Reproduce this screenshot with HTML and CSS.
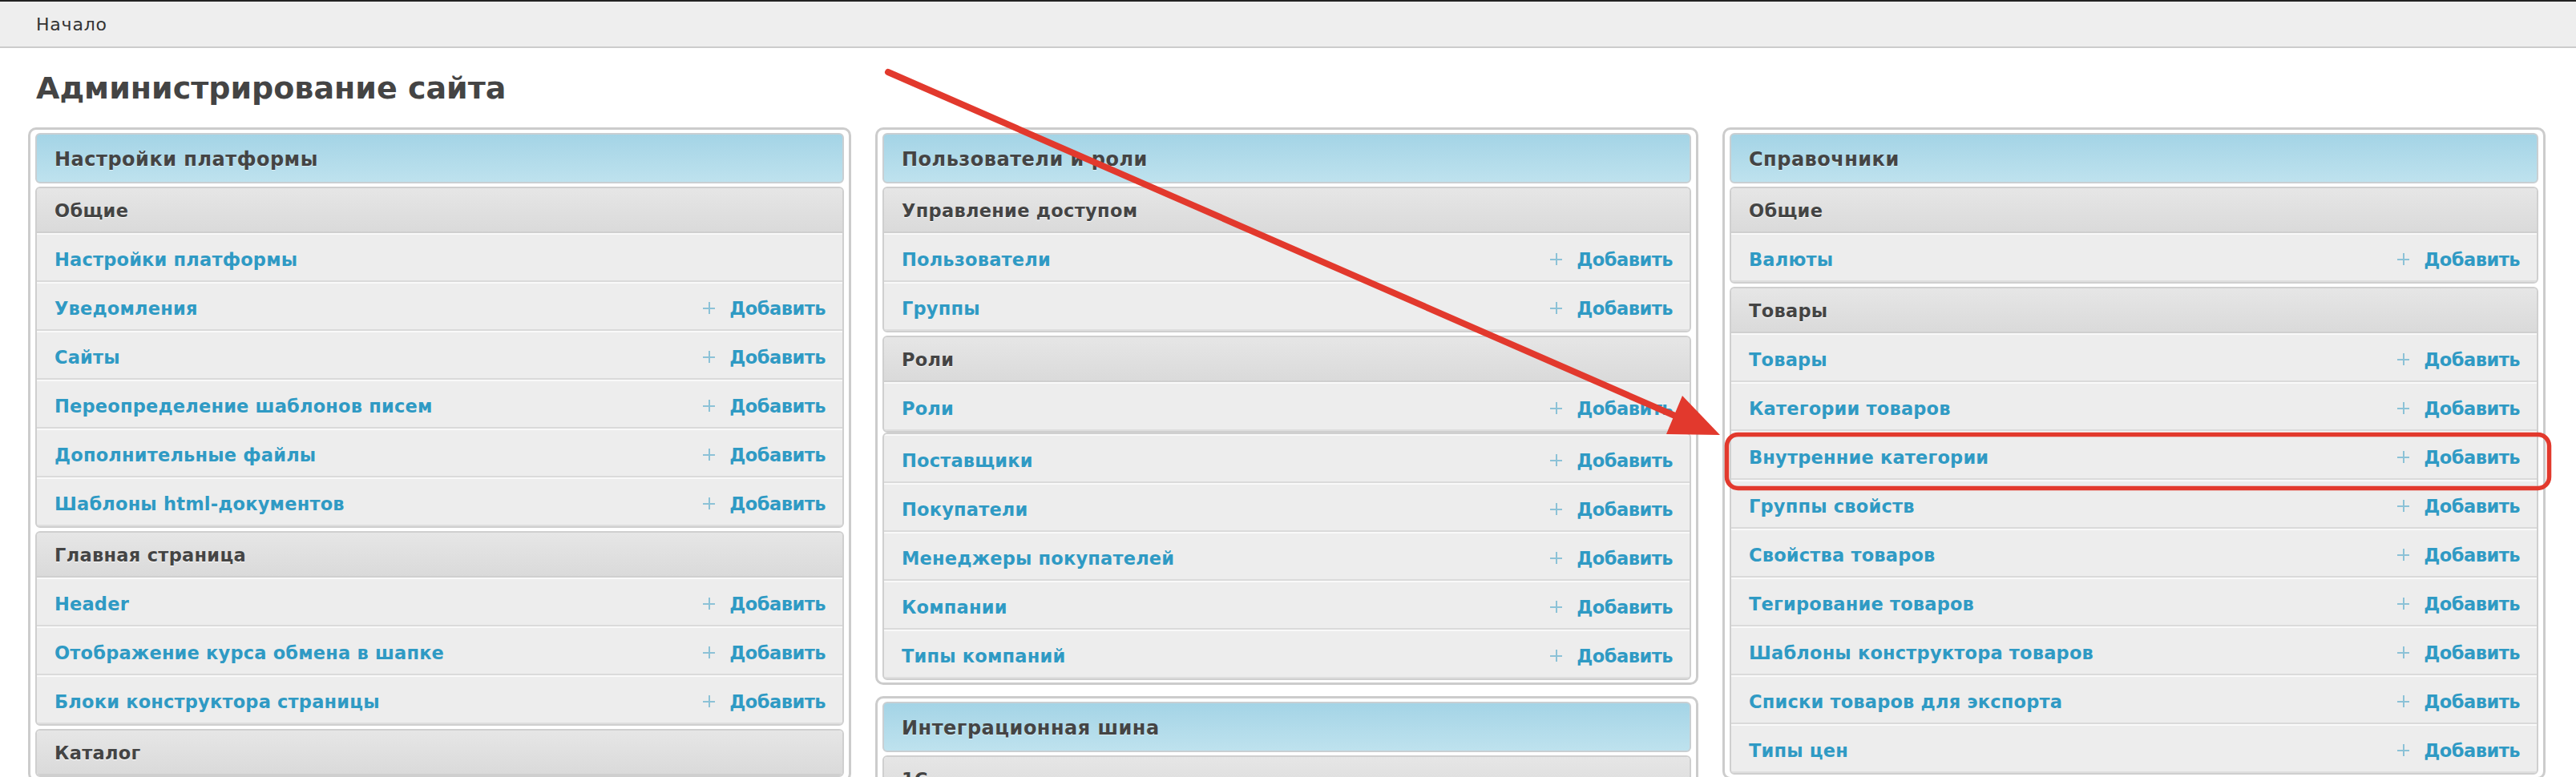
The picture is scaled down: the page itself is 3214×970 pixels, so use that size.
FILE: index.html
```html
<!DOCTYPE html>
<html lang="ru">
<head>
  <meta charset="UTF-8">
  <title>Администрирование сайта</title>
  <link rel="stylesheet" href="styles.css">
</head>
<body>
  <div class="topbar"><a class="crumb">Начало</a></div>

  <div class="content">
    <h1>Администрирование сайта</h1>

    <div class="dashboard">
      <!-- left column -->
      <div class="column">
        <div class="panel">
          <div class="panel-title">Настройки платформы</div>
          <div class="group">
            <div class="group-title">Общие</div>
            <div class="row"><a class="model">Настройки платформы</a></div>
            <div class="row"><a class="model">Уведомления</a><a class="add">Добавить</a></div>
            <div class="row"><a class="model">Сайты</a><a class="add">Добавить</a></div>
            <div class="row"><a class="model">Переопределение шаблонов писем</a><a class="add">Добавить</a></div>
            <div class="row"><a class="model">Дополнительные файлы</a><a class="add">Добавить</a></div>
            <div class="row"><a class="model">Шаблоны html-документов</a><a class="add">Добавить</a></div>
          </div>
          <div class="group">
            <div class="group-title">Главная страница</div>
            <div class="row"><a class="model">Header</a><a class="add">Добавить</a></div>
            <div class="row"><a class="model">Отображение курса обмена в шапке</a><a class="add">Добавить</a></div>
            <div class="row"><a class="model">Блоки конструктора страницы</a><a class="add">Добавить</a></div>
          </div>
          <div class="group">
            <div class="group-title">Каталог</div>
          </div>
        </div>
      </div>

      <!-- middle column -->
      <div class="column">
        <div class="panel">
          <div class="panel-title">Пользователи и роли</div>
          <div class="group">
            <div class="group-title">Управление доступом</div>
            <div class="row"><a class="model">Пользователи</a><a class="add">Добавить</a></div>
            <div class="row"><a class="model">Группы</a><a class="add">Добавить</a></div>
          </div>
          <div class="group">
            <div class="group-title">Роли</div>
            <div class="row"><a class="model">Роли</a><a class="add">Добавить</a></div>
          </div>
          <div class="group plain">
            <div class="row"><a class="model">Поставщики</a><a class="add">Добавить</a></div>
            <div class="row"><a class="model">Покупатели</a><a class="add">Добавить</a></div>
            <div class="row"><a class="model">Менеджеры покупателей</a><a class="add">Добавить</a></div>
            <div class="row"><a class="model">Компании</a><a class="add">Добавить</a></div>
            <div class="row"><a class="model">Типы компаний</a><a class="add">Добавить</a></div>
          </div>
        </div>
        <div class="panel">
          <div class="panel-title">Интеграционная шина</div>
          <div class="group">
            <div class="group-title">1С</div>
          </div>
        </div>
      </div>

      <!-- right column -->
      <div class="column">
        <div class="panel">
          <div class="panel-title">Справочники</div>
          <div class="group">
            <div class="group-title">Общие</div>
            <div class="row"><a class="model">Валюты</a><a class="add">Добавить</a></div>
          </div>
          <div class="group">
            <div class="group-title">Товары</div>
            <div class="row"><a class="model">Товары</a><a class="add">Добавить</a></div>
            <div class="row"><a class="model">Категории товаров</a><a class="add">Добавить</a></div>
            <div class="row"><a class="model">Внутренние категории</a><a class="add">Добавить</a></div>
            <div class="row"><a class="model">Группы свойств</a><a class="add">Добавить</a></div>
            <div class="row"><a class="model">Свойства товаров</a><a class="add">Добавить</a></div>
            <div class="row"><a class="model">Тегирование товаров</a><a class="add">Добавить</a></div>
            <div class="row"><a class="model">Шаблоны конструктора товаров</a><a class="add">Добавить</a></div>
            <div class="row"><a class="model">Списки товаров для экспорта</a><a class="add">Добавить</a></div>
            <div class="row"><a class="model">Типы цен</a><a class="add">Добавить</a></div>
          </div>
        </div>
      </div>
    </div>
  </div>

  <!-- red annotation drawn over the page -->
  <svg class="annotation" width="3214" height="970" viewBox="0 0 3214 970">
    <rect x="2154.5" y="542.5" width="1026" height="67" rx="14" fill="none" stroke="#e2392d" stroke-width="5.5"/>
    <line x1="1108" y1="90" x2="2092" y2="520" stroke="#e2392d" stroke-width="8" stroke-linecap="round"/>
    <polygon points="2146,543 2079,542 2099,494" fill="#e2392d"/>
  </svg>
</body>
</html>
```

FILE: styles.css
```css
body {
  margin: 0;
  position: relative;
  font-family: "DejaVu Sans", Verdana, sans-serif;
  color: #333;
  background-color: #fff;
  overflow: hidden;
}
a {
  text-decoration: none;
  cursor: pointer;
}

/* breadcrumbs bar */
.topbar {
  height: 56px;
  display: flex;
  align-items: center;
  padding-left: 45px;
  background-color: #eeeeee;
  border-top: 2px solid #222;
  border-bottom: 2px solid #cccccc;
}
.crumb {
  font-size: 22px;
  letter-spacing: 0.8px;
  color: #333;
}

.content {
  padding: 0 38px 0 35px;
}
h1 {
  margin: 27px 0 26px 10px;
  font-size: 38px;
  line-height: 46px;
  font-weight: bold;
  color: #444;
}

.dashboard {
  display: grid;
  grid-template-columns: repeat(3, 1fr);
  gap: 30px;
  align-items: start;
}
.column {
  display: flex;
  flex-direction: column;
  gap: 14px;
}

/* module box */
.panel {
  border: 3px solid #cccccc;
  border-radius: 10px;
  padding: 4px 6px 3px;
  background-color: #fff;
}
.panel-title {
  height: 57px;
  display: flex;
  align-items: center;
  padding: 2px 0 0 22px;
  margin-bottom: 4px;
  border: 2px solid #c9cfd2;
  border-radius: 6px;
  background: linear-gradient(#a4d4e6, #bee2ee);
  font-size: 24px;
  letter-spacing: 0.5px;
  font-weight: bold;
  color: #444;
  text-shadow: 0 1px 0 rgba(255, 255, 255, 0.5);
}

.group {
  border: 2px solid #cfcfcf;
  border-radius: 6px;
  margin-bottom: 4px;
  overflow: hidden;
  background-color: #ededed;
}
.group:last-child {
  margin-bottom: 0;
}
.group.plain {
  margin-top: -4px;
}
.group-title {
  height: 52px;
  display: flex;
  align-items: center;
  padding: 2px 0 0 22px;
  border-bottom: 2px solid #cfcfcf;
  background: linear-gradient(#e6e6e6, #dadada);
  font-size: 22.5px;
  letter-spacing: 0.3px;
  font-weight: bold;
  color: #444;
  text-shadow: 0 1px 0 #fff;
}

.row {
  height: 53px;
  display: flex;
  align-items: center;
  justify-content: space-between;
  padding: 4px 21px 0 22px;
  border-top: 2px solid #f9f9f9;
  border-bottom: 2px solid #dadada;
}
.row:last-child {
  border-bottom-color: #dedede;
}
.model,
.add {
  font-size: 22.5px;
  letter-spacing: 0.2px;
  font-weight: bold;
  color: #2f9ac4;
}
.add {
  display: flex;
  align-items: center;
  letter-spacing: -0.5px;
}
.add::before {
  content: "";
  width: 15px;
  height: 15px;
  margin-right: 18px;
  background:
    linear-gradient(#8cc2d7, #8cc2d7) center / 15px 2px no-repeat,
    linear-gradient(#8cc2d7, #8cc2d7) center / 2px 15px no-repeat;
}

.annotation {
  position: absolute;
  top: 0;
  left: 0;
  pointer-events: none;
}
```
